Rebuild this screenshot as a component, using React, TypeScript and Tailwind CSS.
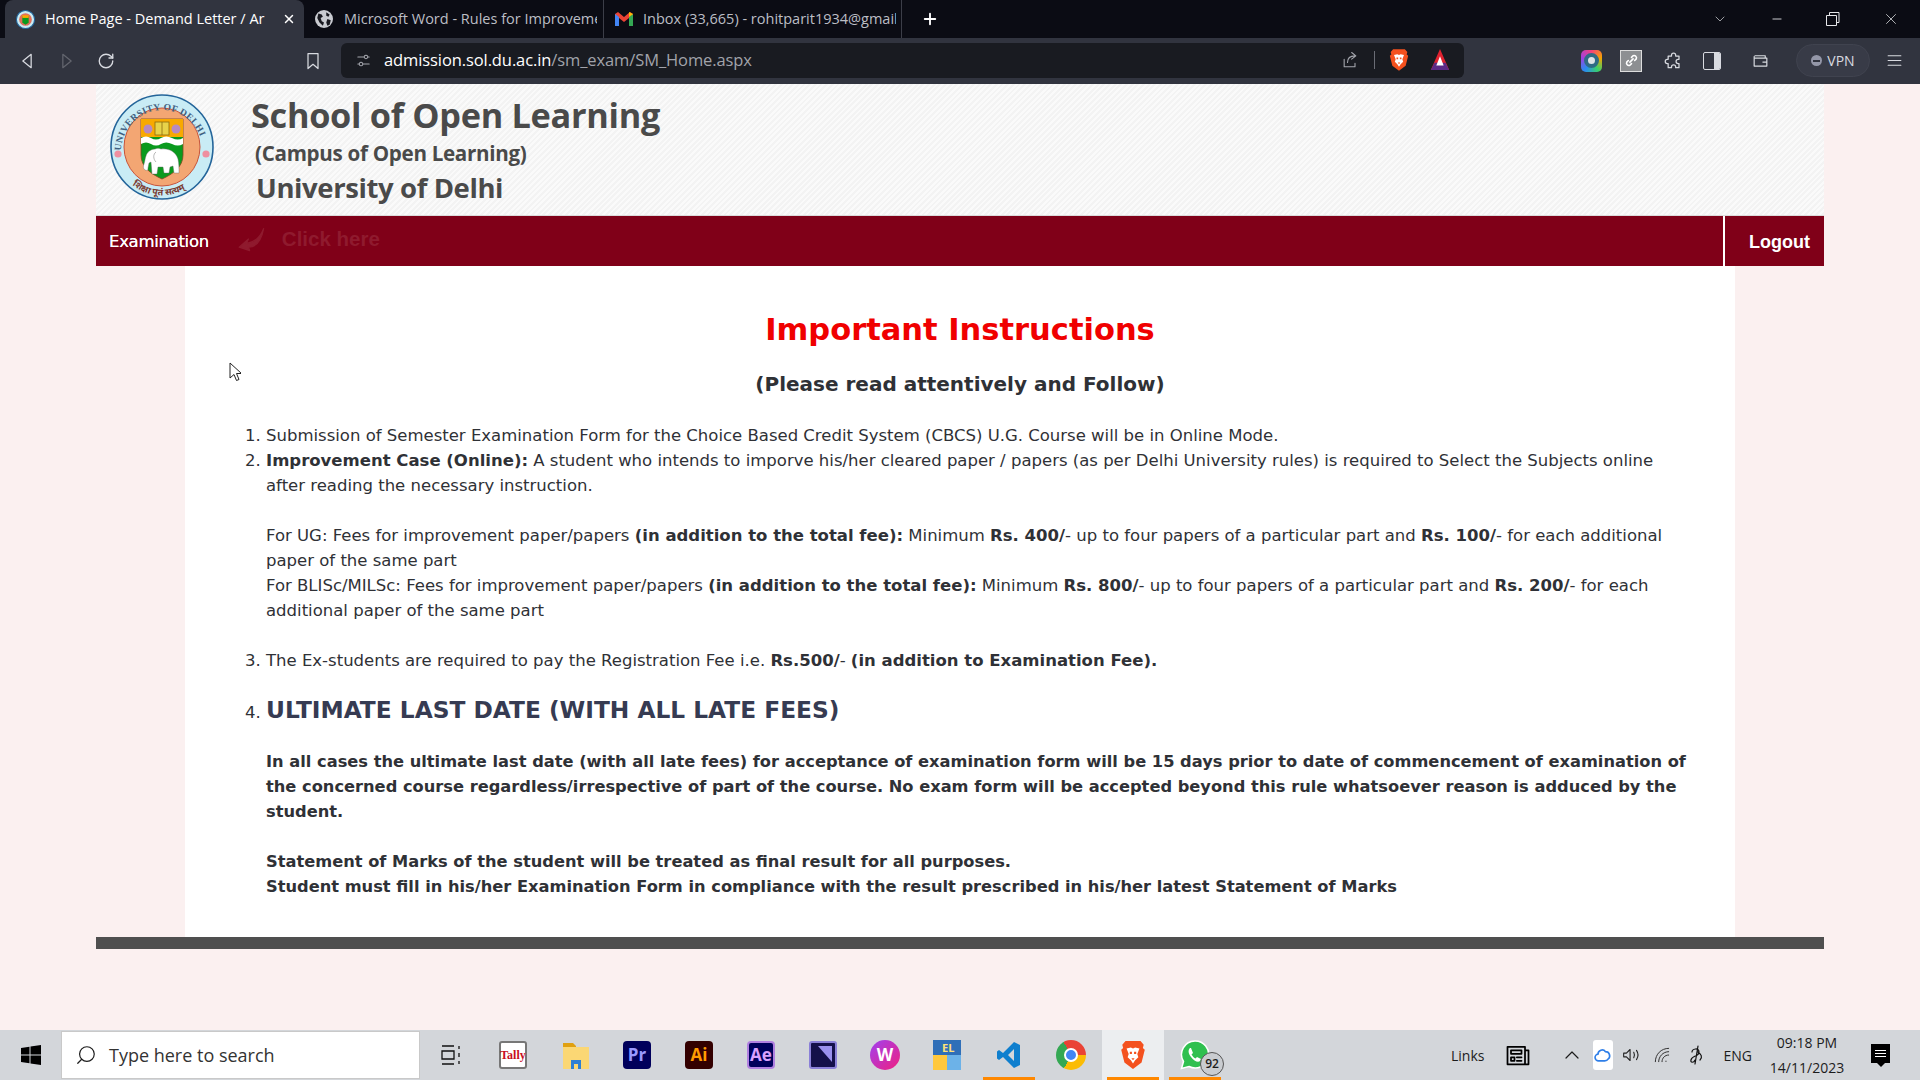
import { ChevronDown, ChevronUp, Minus, Plus, RotateCw, Search, X } from "lucide-react";

// Small stroke icon helper for the browser chrome
function Ico({ d, cls = "h-5 w-5 text-[#d8dae0]", sw = 1.5 }: { d: string; cls?: string; sw?: number }) {
  return (
    <svg viewBox="0 0 24 24" fill="none" stroke="currentColor" strokeWidth={sw} className={cls} aria-hidden="true">
      <path d={d} strokeLinejoin="round" strokeLinecap="round" />
    </svg>
  );
}

function BraveIcon({ cls }: { cls: string }) {
  return (
    <svg viewBox="0 0 24 28" className={cls} aria-hidden="true">
      <path d="M5 1h14l3 3.500-.8 3L23 9l-3 12-8 6-8-6L1 9l1.800-1.500L2 4.500z" fill="#f4511e" />
      <path d="M6 8l4-1 2 1 2-1 4 1-2 5 1 3-3 3-2 3-2-3-3-3 1-3z" fill="#fff" />
      <path d="M9 11h2v2H9zM13 11h2v2h-2zM10.500 17h3l-1.500 2z" fill="#f4511e" />
    </svg>
  );
}

function GlobeFav() {
  return (
    <svg viewBox="0 0 16 16" className="h-[18px] w-[18px] shrink-0" aria-hidden="true">
      <circle cx="8" cy="8" r="8" fill="#c9cbd1" />
      <path d="M3 3l3 1 1 2-2 1 1 3 2 1-1 3-3-3-2-4zM10 2l3 2-1 2-2-1zM11 8l3 1-1 4-2 1-1-3z" fill="#17181f" />
    </svg>
  );
}

function DuLogo({ cls }: { cls: string }) {
  return (
    <svg viewBox="0 0 104 106" className={cls} aria-hidden="true">
      <defs>
        <path id="duArc" d="M11 58 A41 42 0 0 1 93 58" />
        <path id="duArcLow" d="M14 82 A47 47 0 0 0 90 82" />
      </defs>
      <ellipse cx="52" cy="53" rx="51" ry="52" fill="#c9ecf5" stroke="#24659a" strokeWidth="1.600" />
      <ellipse cx="52" cy="53" rx="38" ry="39" fill="#f3a673" stroke="#c8543a" strokeWidth="1" />
      <text fontSize="9.500" fill="#3f5f80" fontFamily="Liberation Serif, serif" letterSpacing="0.300">
        <textPath href="#duArc" startOffset="1%">UNIVERSITY OF DELHI</textPath>
      </text>
      <text fontSize="9" fill="#7a3a30" fontFamily="Noto Sans, sans-serif" fontWeight="700">
        <textPath href="#duArcLow" startOffset="14%">शिक्षा पूतं सत्यम्</textPath>
      </text>
      <circle cx="8" cy="60" r="3.600" fill="#ef8fa0" />
      <circle cx="96" cy="60" r="3.600" fill="#ef8fa0" />
      <path d="M31 25h42v36c0 12-10 19-21 24-11-5-21-12-21-24z" fill="#0a9a1e" stroke="#7a4a20" strokeWidth="0.800" />
      <path d="M31 25h42v18H31z" fill="#f8a900" />
      <path d="M31 44q5-3 10 0t10 0 11 0 11 0v6q-5 3-11 0t-11 0-10 0-10 0z" fill="#fff" />
      <rect x="45" y="28" width="14" height="13" fill="#e8d24a" stroke="#8a6a10" strokeWidth="0.800" />
      <path d="M52 28v13" stroke="#8a6a10" strokeWidth="0.800" />
      <circle cx="38" cy="35" r="4.500" fill="#b78ac0" />
      <circle cx="66" cy="35" r="4.500" fill="#b78ac0" />
      {/* elephant facing left */}
      <path d="M35 76c-2-1-2-4-1-6 1-3 1-6 2-8 1-4 5-7 9-7 2-1 4-1 6 0 8-1 15 3 17 10 1 4 1 9 1 14h-5l-1-7-3 1-1 6h-5l-1-6h-5l-1 7h-5l-1-12-2 1-1 5c0 2 0 3-3 2z" fill="#fff" stroke="#666" strokeWidth="0.400" />
      <path d="M46 58c-3 2-3 7 0 10" fill="none" stroke="#888" strokeWidth="0.600" />
    </svg>
  );
}

function BrowserChrome() {
  return (
    <>
      {/* tab strip */}
      <div className="flex h-[38px] shrink-0 bg-[#0b0c14] pl-[5px] text-[14.500px] font-['Open_Sans',sans-serif]">
        <div className="flex w-[299px] items-center rounded-t-lg bg-[#31343f] pl-[11px] pr-[8px] text-white">
          <svg viewBox="0 0 18 18" className="h-[19px] w-[19px] shrink-0" aria-hidden="true">
            <circle cx="9" cy="9" r="8.600" fill="#c9ecf5" stroke="#24659a" />
            <circle cx="9" cy="9" r="6" fill="#e0705a" />
            <path d="M6 6h6v6l-3 2-3-2z" fill="#0a9a1e" />
            <path d="M6 5h6v2.500H6z" fill="#f8a900" />
          </svg>
          <span className="ml-[10px] w-[224px] overflow-hidden whitespace-nowrap">Home Page - Demand Letter / Ar</span>
          <X className="ml-auto h-[14px] w-[14px]" strokeWidth={2.5} />
        </div>
        <div className="flex w-[300px] items-center border-r border-[#3c3e48] pl-[11px] text-[#bcbec5]">
          <GlobeFav />
          <span className="ml-[11px] w-[253px] overflow-hidden whitespace-nowrap">Microsoft Word - Rules for Improveme</span>
        </div>
        <div className="flex w-[298px] items-center border-r border-[#3c3e48] pl-[11px] text-[#bcbec5]">
          <svg viewBox="0 0 18 14" className="h-[14px] w-[18px] shrink-0" aria-hidden="true">
            <path d="M0 14V2l3-2 6 5 6-5 3 2v12h-4V6L9 10 4 6v8z" fill="#ea4335" />
            <path d="M0 14V2l4 3v9z" fill="#4285f4" />
            <path d="M18 14V2l-4 3v9z" fill="#34a853" />
            <path d="M14 5V0l4 2z" fill="#fbbc04" />
          </svg>
          <span className="ml-[10px] w-[253px] overflow-hidden whitespace-nowrap">Inbox (33,665) - rohitparit1934@gmail</span>
        </div>
        <Plus className="ml-[19px] mt-[10px] h-[18px] w-[18px] text-white" strokeWidth={2.5} />
        <div className="ml-auto flex items-center text-[#e6e7ea]">
          <ChevronDown className="mr-[42px] h-[16px] w-[16px]" strokeWidth={1} />
          <Minus className="mr-[42px] h-[14px] w-[14px]" strokeWidth={1.5} />
          <svg viewBox="0 0 14 14" fill="none" stroke="currentColor" className="mr-[42px] h-[14px] w-[14px]" aria-hidden="true">
            <path d="M3.500 3.500V.5h9.500v10h-2.500M.5 3.500h10v10H.5z" />
          </svg>
          <X className="mr-[20px] h-[18px] w-[18px]" strokeWidth={1} />
        </div>
      </div>
      {/* toolbar */}
      <div className="flex h-[46px] shrink-0 items-center bg-[#31343f] font-['Open_Sans',sans-serif]">
        <div className="ml-[17px] flex w-[324px] items-center">
          <Ico d="M17 4 7 12l10 8z" />
          <span className="w-[20px]" />
          <Ico d="M7 4l10 8-10 8z" cls="h-5 w-5 text-[#63656e]" />
          <span className="w-[20px]" />
          <RotateCw className="h-[18px] w-[18px] text-[#d8dae0]" strokeWidth={1.8} />
          <span className="w-[188px]" />
          <Ico d="M6 3h12v18l-6-5-6 5z" />
        </div>
        <div className="-mt-[2px] flex h-[35px] w-[1123px] items-center rounded-md bg-[#191b21] pl-[14px] pr-[13px]">
          <Ico d="M4 7h9M18 7h2M4 17h2M11 17h9M15.500 4.500a2.500 2.500 0 1 0 .01 0zM8.500 14.500a2.500 2.500 0 1 0 .01 0z" cls="h-[17px] w-[17px] text-[#a5a7ae]" />
          <span className="ml-[12px] whitespace-nowrap text-[16.500px] tracking-[-0.1px] text-white">
            admission.sol.du.ac.in<span className="text-[#a1a3aa]">/sm_exam/SM_Home.aspx</span>
          </span>
          <Ico d="M5 11v9h13v-4M9 15c0-5 3-8 9-8M14 3l5 4-5 4" cls="ml-auto h-5 w-5 text-[#a5a7ae]" sw={1.3} />
          <span className="mx-[14px] h-[18px] w-px bg-[#6a6c75]" />
          <BraveIcon cls="h-[24px] w-[20px]" />
          <svg viewBox="0 0 22 24" className="ml-[20px] h-[22px] w-[22px]" aria-hidden="true">
            <path d="M11 0l10 23H1z" fill="#e0222f" />
            <path d="M1 23l4-8h12l4 8z" fill="#5b2a86" />
            <path d="M11 8l4 10H7z" fill="#fff" />
          </svg>
        </div>
        <div className="ml-[117px] -mt-[1px] flex items-center">
          <span className="flex h-[22px] w-[21px] items-center justify-center rounded-[5px] bg-[conic-gradient(#f5417c,#f5a300,#3ad06b,#2a8cf0,#a040e0,#f5417c)]">
            <span className="h-[15px] w-[15px] rounded-full border-[4px] border-[#2f6b85] bg-[#dfe3e6]" />
          </span>
          <span className="ml-[18px] flex h-[22px] w-[22px] items-center justify-center border border-[#ddd] bg-[#8d8f92]">
            <Ico d="M10 14l4-4M8 12l-2 2a3 3 0 0 0 4 4l2-2M16 12l2-2a3 3 0 0 0-4-4l-2 2" cls="h-[19px] w-[19px] text-white" sw={2} />
          </span>
          <Ico d="M9 5a2.500 2.500 0 0 1 5 0v1h4v4h-1a2.500 2.500 0 0 0 0 5h1v5h-4v-1a2.500 2.500 0 0 0-5 0v1H5v-5H4a2.500 2.500 0 0 1 0-5h1V6h4z" cls="ml-[22px] h-[20px] w-[20px] text-[#d8dae0]" />
          <span className="ml-[19px] flex h-[18px] w-[18px] overflow-hidden rounded-[2px] border-[1.500px] border-[#d8dae0]">
            <span className="flex-1" />
            <span className="w-[6px] bg-[#d8dae0]" />
          </span>
          <Ico d="M5 6h13v3M4 7v12h16V9H4M15 14h5" cls="ml-[30px] h-[19px] w-[19px] text-[#d8dae0]" />
          <span className="ml-[26px] flex h-[33px] w-[74px] items-center justify-center gap-[5px] rounded-full border border-[#40434f] bg-[#383b47] text-[14px] text-[#d8dae0]">
            <span className="flex h-[11px] w-[11px] items-center justify-center rounded-full bg-[#9497a8]">
              <span className="h-[2px] w-[7px] bg-[#31343f]" />
            </span>
            VPN
          </span>
          <Ico d="M4 6h16M4 12h16M4 18h16" cls="ml-[15px] h-[19px] w-[19px] text-[#d8dae0]" />
        </div>
      </div>
    </>
  );
}

function Instructions() {
  return (
    <main className="mx-auto w-[1550px] bg-white pb-[38px] pt-[45px] font-['DejaVu_Sans',sans-serif] text-[16.500px] leading-[25px] text-[#2f3136]">
      <h1 className="text-center text-[30.500px] font-bold leading-[38px] text-[#f00000]">Important Instructions</h1>
      <h2 className="mt-[21px] text-center text-[20px] font-bold leading-[28px] text-[#2f3136]">(Please read attentively and Follow)</h2>
      <ol className="ml-[81px] mr-[50px] mt-[25px] list-decimal">
        <li>Submission of Semester Examination Form for the Choice Based Credit System (CBCS) U.G. Course will be in Online Mode.</li>
        <li>
          <b>Improvement Case (Online):</b> A student who intends to imporve his/her cleared paper / papers (as per Delhi University rules) is required to Select the Subjects online after reading the necessary instruction.
          <br />
          <br />
          For UG: Fees for improvement paper/papers <b>(in addition to the total fee):</b> Minimum <b>Rs. 400/</b>- up to four papers of a particular part and <b>Rs. 100/</b>- for each additional paper of the same part
          <br />
          For BLISc/MILSc: Fees for improvement paper/papers <b>(in addition to the total fee):</b> Minimum <b>Rs. 800/</b>- up to four papers of a particular part and <b>Rs. 200/</b>- for each additional paper of the same part
          <br />
          <br />
        </li>
        <li>The Ex-students are required to pay the Registration Fee i.e. <b>Rs.500/</b>- <b>(in addition to Examination Fee).</b></li>
        <li className="mt-[19px]">
          <h3 className="text-[23.300px] font-bold leading-[36px] text-[#363b52]">ULTIMATE LAST DATE (WITH ALL LATE FEES)</h3>
          <div className="-mr-[8px] mt-[21px] text-[16.250px] font-bold">
            In all cases the ultimate last date (with all late fees) for acceptance of examination form will be 15 days prior to date of commencement of examination of the concerned course regardless/irrespective of part of the course. No exam form will be accepted beyond this rule whatsoever reason is adduced by the student.
            <br />
            <br />
            Statement of Marks of the student will be treated as final result for all purposes.
            <br />
            Student must fill in his/her Examination Form in compliance with the result prescribed in his/her latest Statement of Marks
          </div>
        </li>
      </ol>
    </main>
  );
}

function TaskSlot({ children, active, underline }: { children: React.ReactNode; active?: boolean; underline?: boolean }) {
  return (
    <div className={`relative flex h-[50px] w-[62px] items-center justify-center ${active ? "bg-[#eceef0]" : ""}`}>
      {children}
      {underline && <span className="absolute bottom-0 left-[5px] right-[5px] h-[3px] bg-[#ff8800]" />}
    </div>
  );
}

function AppTile({ label, bg, fg, border }: { label: string; bg: string; fg: string; border?: string }) {
  return (
    <span className={`flex h-[28px] w-[28px] items-center justify-center rounded-[4px] text-[17px] font-bold ${bg} ${fg} ${border ?? ""}`}>
      {label}
    </span>
  );
}

function Taskbar() {
  return (
    <footer className="flex h-[50px] shrink-0 items-center bg-[#d3d6da] font-['Open_Sans',sans-serif] text-[#1c1c1c]">
      <div className="flex w-[61px] justify-center">
        <svg viewBox="0 0 20 20" className="h-[20px] w-[20px]" aria-hidden="true">
          <path d="M0 3l8.500-1.200V9.500H0zM9.500 1.600L20 0v9.500H9.500zM0 10.500h8.500v7.700L0 17zM9.500 10.500H20V20L9.500 18.400z" fill="#000" />
        </svg>
      </div>
      <div className="flex h-[48px] w-[359px] items-center border border-[#c9c9c9] bg-white pl-[13px]">
        <Search className="h-[22px] w-[22px] -scale-x-100" strokeWidth={1.3} />
        <span className="ml-[12px] text-[18px] text-[#333]">Type here to search</span>
      </div>
      <TaskSlot>
        <svg viewBox="0 0 20 20" fill="none" stroke="#111" strokeWidth="1.300" className="h-[20px] w-[20px]" aria-hidden="true">
          <path d="M1 1h12M1 19h12M1 6h12v8H1zM18 1v3M18 8v4M18 16v3" />
        </svg>
      </TaskSlot>
      <TaskSlot>
        <span className="flex h-[28px] w-[28px] items-center justify-center rounded-[3px] border-2 border-[#777] bg-white text-[12px] font-bold text-[#c8101e] [font-family:'Liberation_Serif',serif]">Tally</span>
      </TaskSlot>
      <TaskSlot>
        <svg viewBox="0 0 28 28" className="h-[28px] w-[28px]" aria-hidden="true">
          <path d="M2 2h10l3 3v6H2z" fill="#e0a010" />
          <path d="M2 6h26v22H2z" fill="#fbd774" />
          <path d="M10 28v-9h10v9h-3v-5h-4v5z" fill="#2d7fd4" />
        </svg>
      </TaskSlot>
      <TaskSlot><AppTile label="Pr" bg="bg-[#00005b]" fg="text-[#9a9aff]" /></TaskSlot>
      <TaskSlot><AppTile label="Ai" bg="bg-[#300]" fg="text-[#ff9a00]" /></TaskSlot>
      <TaskSlot><AppTile label="Ae" bg="bg-[#00005b]" fg="text-[#d9a0ff]" border="border-2 border-[#b080e0]" /></TaskSlot>
      <TaskSlot>
        <span className="flex h-[28px] w-[28px] items-center justify-center rounded-[3px] border-2 border-[#8a80d8] bg-[#14104a]">
          <svg viewBox="0 0 20 20" className="h-[20px] w-[20px]" aria-hidden="true">
            <path d="M5 1l14 16V1z" fill="#9a90ee" />
          </svg>
        </span>
      </TaskSlot>
      <TaskSlot>
        <span className="flex h-[30px] w-[30px] items-center justify-center rounded-full bg-[linear-gradient(135deg,#a040f0,#f02080)] text-[17px] font-bold text-white">W</span>
      </TaskSlot>
      <TaskSlot>
        <span className="grid h-[30px] w-[28px] grid-cols-2 grid-rows-2 text-[11px] font-bold leading-[15px]">
          <span className="col-span-2 bg-[#2f6fb8] pl-[9px] text-[#ffe27a]">EL</span>
          <span className="bg-[#ffc83d]" />
          <span className="bg-[#6cb2e8]" />
        </span>
      </TaskSlot>
      <TaskSlot underline>
        <svg viewBox="0 0 24 28" className="h-[28px] w-[26px]" aria-hidden="true">
          <path d="M17 1l6 3v20l-6 3L6 16l-4 3-2-1.500V10.500L2 9l4 3zM17 8l-6 6 6 6z" fill="#0e7fce" fillRule="evenodd" />
        </svg>
      </TaskSlot>
      <TaskSlot>
        <span className="flex h-[30px] w-[30px] items-center justify-center rounded-full bg-[conic-gradient(from_-30deg,#ea4335_0_33%,#fbbc04_33%_66%,#34a853_66%_100%)]">
          <span className="h-[14px] w-[14px] rounded-full border-2 border-white bg-[#4285f4]" />
        </span>
      </TaskSlot>
      <TaskSlot active underline><BraveIcon cls="h-[30px] w-[26px]" /></TaskSlot>
      <TaskSlot underline>
        <svg viewBox="0 0 30 30" className="h-[30px] w-[30px]" aria-hidden="true">
          <path d="M15 1a13.500 13.500 0 0 0-11.500 20.500L1.500 28.500 9 26.500A13.500 13.500 0 1 0 15 1z" fill="#2fc04f" stroke="#fff" strokeWidth="1.500" />
          <path d="M10 8c-2 2-2 5 1 9s7 6 9 4l1-2-4-2-1.500 1.500c-2-1-3-2.500-4-4L13 13l-2-5z" fill="#fff" />
        </svg>
        <span className="absolute left-[36px] top-[22px] flex h-[24px] w-[24px] items-center justify-center rounded-full border border-[#555] bg-[#c9ccd0] text-[12px] font-semibold">92</span>
      </TaskSlot>
      <div className="ml-auto flex items-center">
        <span className="text-[14px]">Links</span>
        <Ico d="M3 5h15v15H3zM18 8h3v12h-3M6 8h9v3H6zM6 14h3v3H6zM11 14h4M11 17h4" cls="ml-[18px] h-[28px] w-[30px] text-black" sw={1.5} />
        <ChevronUp className="ml-[27px] h-[24px] w-[24px]" strokeWidth={1.2} />
        <span className="ml-[9px] flex h-[30px] w-[20px] items-center justify-center rounded-[3px] bg-white">
          <Ico d="M7 19a4 4 0 0 1-1-8 5 5 0 0 1 9-3 5 5 0 0 1 3 9c-1 2-3 2-4 2z" cls="h-[20px] w-[20px] text-[#2f7fe8]" sw={2} />
        </span>
        <Ico d="M4 10v4h3l4 4V6L7 10zM15 9c1 2 1 4 0 6M18 7c2 3 2 7 0 10" cls="ml-[7px] h-[22px] w-[22px] text-[#222]" sw={1.2} />
        <Ico d="M4 20c0-9 7-16 16-16M8 20c0-6 5-12 12-12M12 20c0-4 3-8 8-8M16.500 19.500h.5" cls="ml-[10px] h-[20px] w-[20px] text-[#333]" sw={1.2} />
        <Ico d="M15 3l-3 18M9 9c0-3 7-5 7 0s-7 3-8 8c-1 3 3 3 4 0M15 9c3 2 5 5 2 8" cls="ml-[11px] h-[24px] w-[24px] text-[#111]" sw={1.2} />
        <span className="ml-[17px] text-[14px]">ENG</span>
        <div className="ml-[17px] w-[76px] text-center text-[14px] leading-[25px]">
          <div>09:18 PM</div>
          <div>14/11/2023</div>
        </div>
        <div className="ml-[26px] mr-[30px] flex flex-col items-center">
          <span className="flex h-[19px] w-[19px] flex-col justify-center gap-[2px] bg-black px-[4px]">
            <span className="h-px bg-white" />
            <span className="h-px bg-white" />
            <span className="h-px bg-white" />
          </span>
          <span className="h-0 w-0 border-x-[4px] border-t-[4px] border-x-transparent border-t-black" />
        </div>
      </div>
    </footer>
  );
}

export default function App() {
  return (
    <div className="relative flex h-screen flex-col overflow-hidden bg-[#fbf0f0]">
      <BrowserChrome />
      <div className="flex-1 overflow-hidden">
        <div className="mx-auto w-[1728px]">
          <header className="flex h-[132px] items-start border-b border-[#dcdcdc] bg-[repeating-linear-gradient(135deg,#f3f3f3_0,#f3f3f3_2px,#fafafa_2px,#fafafa_4px)] pl-[14px] pt-[9px] font-['Open_Sans',sans-serif] font-bold text-[#4a4a4a]">
            <DuLogo cls="mt-[1px] h-[106px] w-[104px]" />
            <div className="ml-[37px]">
              <div className="text-[34.300px] leading-[44px] tracking-[-0.3px]">School of Open Learning</div>
              <div className="ml-[4px] mt-[1px] text-[20.600px] font-bold leading-[30px] tracking-[-0.3px]">(Campus of Open Learning)</div>
              <div className="ml-[5px] mt-[1px] text-[27.500px] leading-[38px] tracking-[-0.4px]">University of Delhi</div>
            </div>
          </header>
          <nav className="flex h-[50px] items-center bg-[#800018] text-white">
            <span className="ml-[13px] mt-[3px] font-['DejaVu_Sans',sans-serif] text-[16.500px] font-medium tracking-[-0.3px] [text-shadow:0_0_0.4px_#fff]">Examination</span>
            <Ico d="M22 3c-3 8-8 12-15 13l2-4-8 7 9 3-1-3c6 0 11-5 13-16z" cls="ml-[26px] -mt-[4px] h-[28px] w-[34px] fill-[#8f1a2e] text-[#8f1a2e]" sw={1} />
            <span className="ml-[13px] -mt-[4px] font-['Liberation_Sans',sans-serif] text-[20.500px] font-bold text-[#8f1a2e]">Click here</span>
            <span className="ml-auto h-full w-[2px] bg-white" />
            <span className="w-[99px] pl-[24px] pt-[2px] font-['Liberation_Sans',sans-serif] text-[18px] font-bold">Logout</span>
          </nav>
          <Instructions />
          <div className="h-[12px] bg-[#4f4f4f]" />
        </div>
      </div>
      <Taskbar />
      {/* mouse pointer captured in the screenshot */}
      <svg viewBox="0 0 12 20" className="absolute left-[229px] top-[362px] h-[20px] w-[12px]" aria-hidden="true">
        <path d="M1 1v15l4-3.500 2.500 6 2.500-1-2.500-6h5z" fill="#fff" stroke="#222" strokeWidth="1" />
      </svg>
    </div>
  );
}
